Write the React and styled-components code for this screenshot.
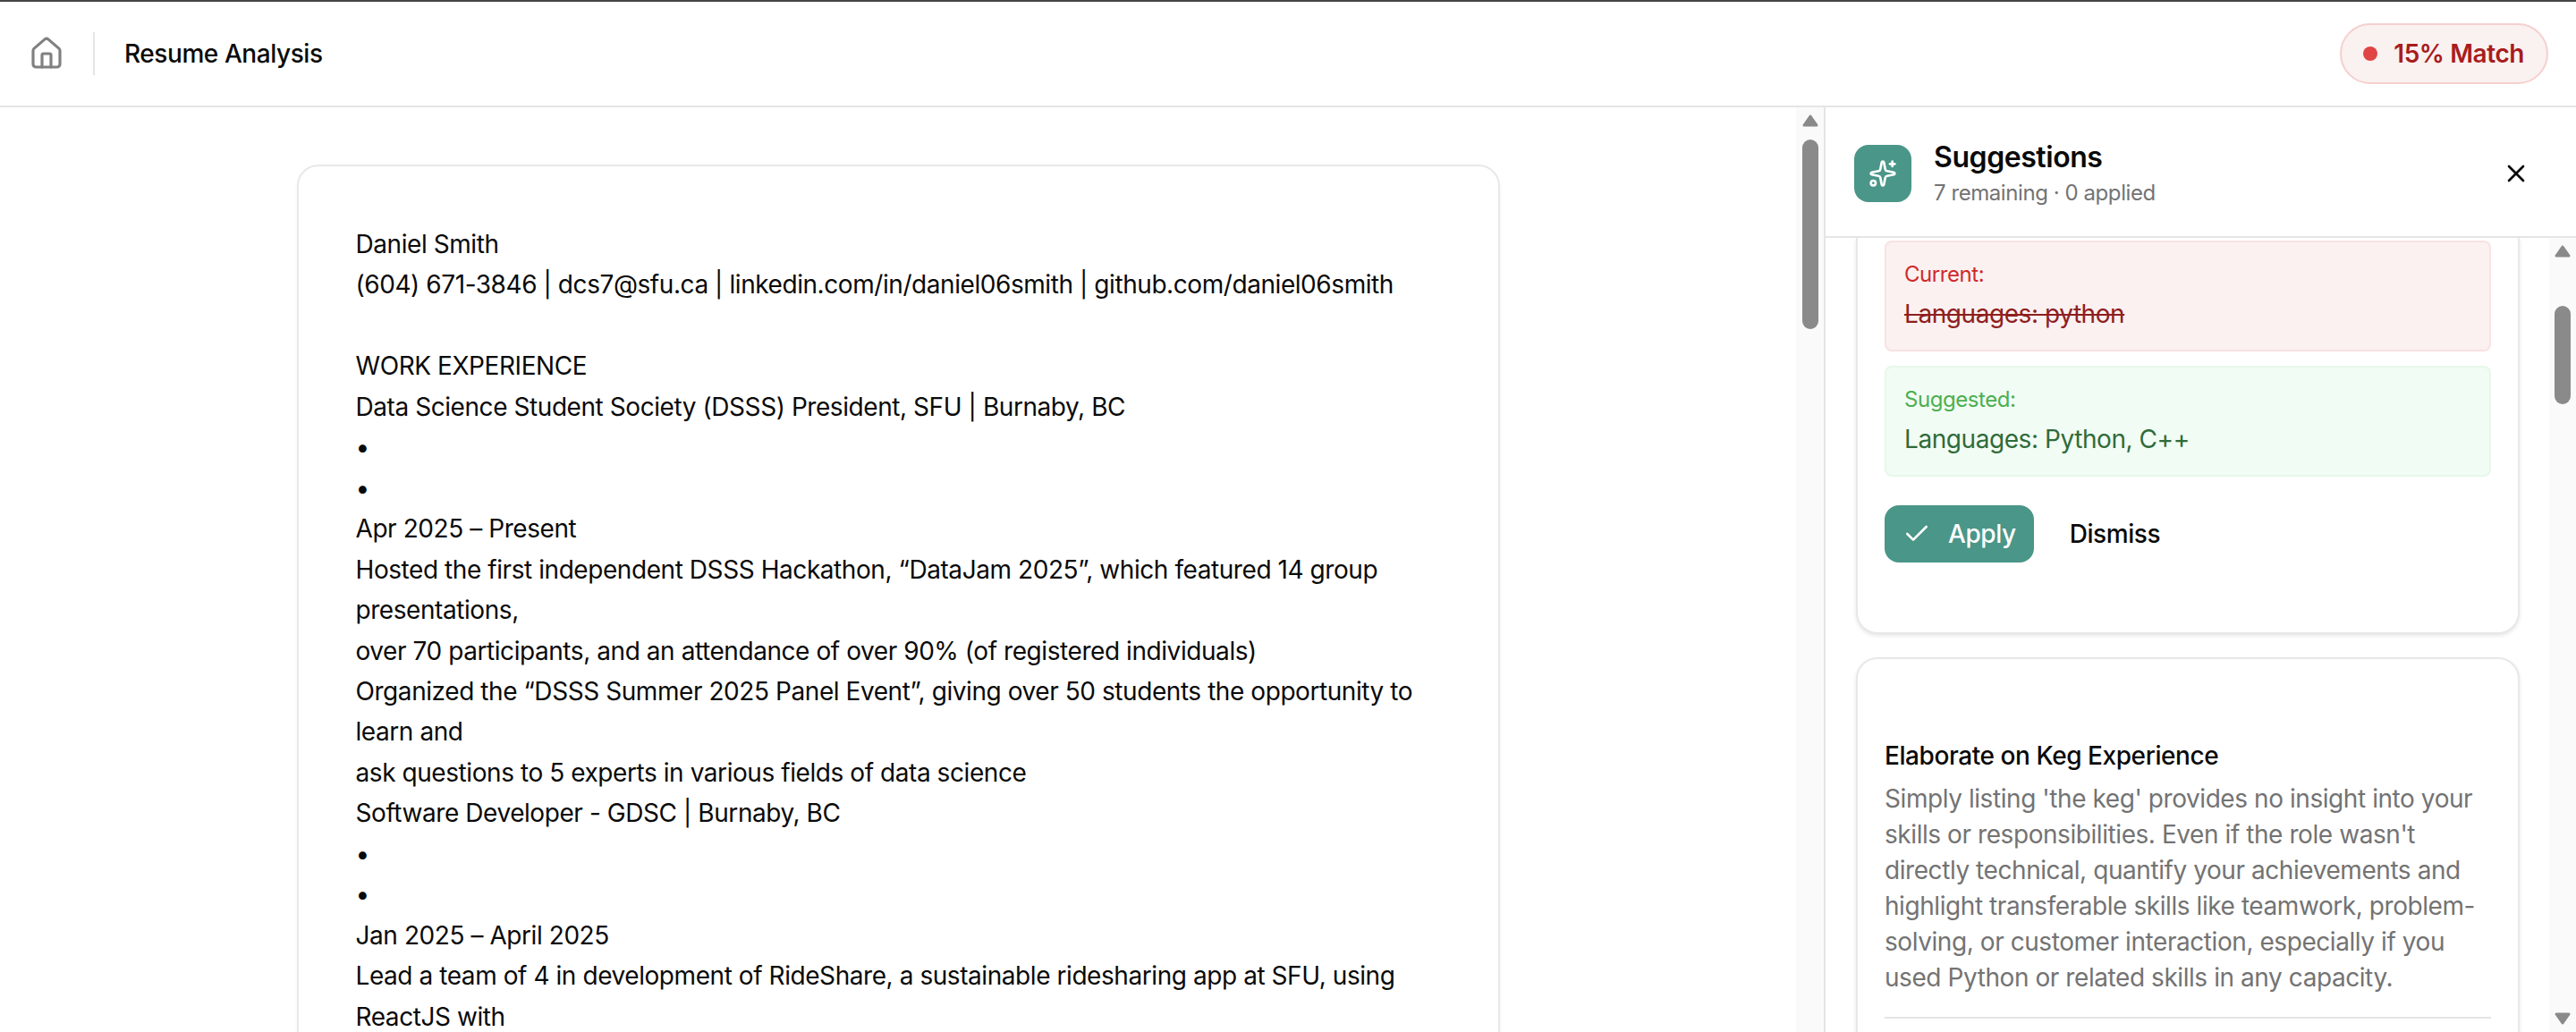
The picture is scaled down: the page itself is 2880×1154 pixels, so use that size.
import styled, { createGlobalStyle } from 'styled-components';
import { House, Sparkles, X, Check } from 'lucide-react';

const resumeLines = [
  'Daniel Smith',
  '(604) 671-3846 | dcs7@sfu.ca | linkedin.com/in/daniel06smith | github.com/daniel06smith',
  '',
  'WORK EXPERIENCE',
  'Data Science Student Society (DSSS) President, SFU | Burnaby, BC',
  '•',
  '•',
  'Apr 2025 – Present',
  'Hosted the first independent DSSS Hackathon, “DataJam 2025”, which featured 14 group',
  'presentations,',
  'over 70 participants, and an attendance of over 90% (of registered individuals)',
  'Organized the “DSSS Summer 2025 Panel Event”, giving over 50 students the opportunity to',
  'learn and',
  'ask questions to 5 experts in various fields of data science',
  'Software Developer - GDSC | Burnaby, BC',
  '•',
  '•',
  'Jan 2025 – April 2025',
  'Lead a team of 4 in development of RideShare, a sustainable ridesharing app at SFU, using',
  'ReactJS with',
];

function ScrollBar({ thumbOffset, thumbHeight, width, downArrow }) {
  return (
    <Track $width={width}>
      <svg width="18" height="14" viewBox="0 0 18 14">
        <path d="M9 2 L16 12 H2 Z" fill="#8a8a8a" stroke="#8a8a8a" strokeWidth="3" strokeLinejoin="round" />
      </svg>
      <Thumb $offset={thumbOffset} $height={thumbHeight} />
      {downArrow && (
        <TrackEnd>
          <svg width="18" height="14" viewBox="0 0 18 14">
            <path d="M9 12 L16 2 H2 Z" fill="#8a8a8a" stroke="#8a8a8a" strokeWidth="3" strokeLinejoin="round" />
          </svg>
        </TrackEnd>
      )}
    </Track>
  );
}

export default function App() {
  return (
    <Page>
      <GlobalStyle />
      <Header>
        <HeaderLeft>
          <HomeButton><House size={40} strokeWidth={1.9} /></HomeButton>
          <HeaderDivider />
          <PageTitle>Resume Analysis</PageTitle>
        </HeaderLeft>
        <MatchBadge>
          <MatchDot />
          15% Match
        </MatchBadge>
      </Header>
      <Body>
        <ResumePane>
          <ResumeScroll>
            <ResumeCard>
              {resumeLines.map((line, i) => (
                <ResumeLine key={i}>{line || '\u00a0'}</ResumeLine>
              ))}
            </ResumeCard>
          </ResumeScroll>
          <ScrollBar width={31} thumbOffset={14} thumbHeight={212} />
        </ResumePane>
        <SidePanel>
          <PanelHeader>
            <PanelHeaderLeft>
              <PanelIcon><Sparkles size={32} strokeWidth={2} /></PanelIcon>
              <div>
                <PanelTitle>Suggestions</PanelTitle>
                <PanelSub>7 remaining · 0 applied</PanelSub>
              </div>
            </PanelHeaderLeft>
            <CloseButton><X size={32} strokeWidth={2} /></CloseButton>
          </PanelHeader>
          <PanelBody>
            <SuggestionList>
              <OpenCard>
                <ChangeBox $kind="current">
                  <ChangeLabel $kind="current">Current:</ChangeLabel>
                  <ChangeValue $kind="current">Languages: python</ChangeValue>
                </ChangeBox>
                <ChangeBox $kind="suggested">
                  <ChangeLabel $kind="suggested">Suggested:</ChangeLabel>
                  <ChangeValue $kind="suggested">Languages: Python, C++</ChangeValue>
                </ChangeBox>
                <Actions>
                  <ApplyButton><Check size={32} strokeWidth={2} />Apply</ApplyButton>
                  <DismissButton>Dismiss</DismissButton>
                </Actions>
              </OpenCard>
              <SuggestionCard>
                <CardTitle>Elaborate on Keg Experience</CardTitle>
                <CardText>
                  Simply listing 'the keg' provides no insight into your skills or responsibilities. Even if the role wasn't directly technical, quantify your achievements and highlight transferable skills like teamwork, problem-solving, or customer interaction, especially if you used Python or related skills in any capacity.
                </CardText>
                <CardRule />
              </SuggestionCard>
            </SuggestionList>
            <ScrollBar width={30} thumbOffset={54} thumbHeight={110} downArrow />
          </PanelBody>
        </SidePanel>
      </Body>
    </Page>
  );
}

const GlobalStyle = createGlobalStyle`
  * {
    box-sizing: border-box;
  }
  body {
    margin: 0;
    background: #fff;
    color: #0a0a0a;
    font-family: "Inter", "Liberation Sans", sans-serif;
    letter-spacing: -0.027em;
  }
`
const Page = styled.div`
  height: 100vh;
  display: flex;
  flex-direction: column;
  overflow: hidden;
  border-top: 2px solid #444;
`
const Header = styled.header`
  height: 118px;
  flex-shrink: 0;
  display: flex;
  align-items: center;
  justify-content: space-between;
  padding: 0 31px 0 32px;
  border-bottom: 2px solid #e5e5e5;
`
const HeaderLeft = styled.div`
  display: flex;
  align-items: center;
`
const HomeButton = styled.div`
  display: flex;
  color: #808080;
`
const HeaderDivider = styled.div`
  width: 2px;
  height: 48px;
  background: #e5e5e5;
  margin: 0 33px 0 32px;
`
const PageTitle = styled.h1`
  margin: 0;
  font-size: 28px;
  line-height: 40px;
  font-weight: 500;
`
const MatchBadge = styled.div`
  height: 68px;
  display: flex;
  align-items: center;
  gap: 18px;
  padding: 0 25px 0 24px;
  border: 2px solid #f5d0ce;
  border-radius: 34px;
  background: #faf1f1;
  color: #a81c1c;
  font-size: 28px;
  font-weight: 600;
`
const MatchDot = styled.span`
  width: 16px;
  height: 16px;
  border-radius: 50%;
  background: #e04444;
`
const Body = styled.div`
  flex: 1;
  min-height: 0;
  display: flex;
`
const ResumePane = styled.main`
  flex: 1;
  min-width: 0;
  display: flex;
`
const ResumeScroll = styled.div`
  flex: 1;
  min-width: 0;
  overflow: hidden;
  padding-top: 64px;
`
const ResumeCard = styled.article`
  width: 1345px;
  margin: 0 auto;
  padding: 65px 64px 64px;
  background: #fff;
  border: 2px solid #e8e8e8;
  border-radius: 24px;
  box-shadow: 0 2px 4px rgba(0, 0, 0, 0.04);
`
const ResumeLine = styled.div`
  font-size: 28px;
  line-height: 45.45px;
  white-space: nowrap;
`
const Track = styled.div`
  width: ${(p) => p.$width}px;
  flex-shrink: 0;
  display: flex;
  flex-direction: column;
  align-items: center;
  padding: 8px 0 8px;
  background: #fafafa;
`
const Thumb = styled.div`
  width: 18px;
  height: ${(p) => p.$height}px;
  margin-top: ${(p) => p.$offset}px;
  border-radius: 9px;
  background: #8a8a8a;
`
const TrackEnd = styled.div`
  margin-top: auto;
  display: flex;
`
const SidePanel = styled.aside`
  width: 841px;
  flex-shrink: 0;
  display: flex;
  flex-direction: column;
  border-left: 2px solid #e5e5e5;
`
const PanelHeader = styled.div`
  flex-shrink: 0;
  display: flex;
  align-items: center;
  justify-content: space-between;
  padding: 36px 43px 32px 32px;
  border-bottom: 2px solid #e5e5e5;
`
const PanelHeaderLeft = styled.div`
  display: flex;
  align-items: center;
  gap: 25px;
`
const PanelIcon = styled.div`
  width: 64px;
  height: 64px;
  display: flex;
  align-items: center;
  justify-content: center;
  border-radius: 16px;
  background: #4a9688;
  color: #fff;
`
const PanelTitle = styled.h2`
  margin: 0;
  font-size: 32px;
  line-height: 40px;
  font-weight: 600;
`
const PanelSub = styled.p`
  margin: 4px 0 0;
  font-size: 24px;
  line-height: 32px;
  color: #737373;
`
const CloseButton = styled.button`
  display: flex;
  padding: 8px;
  border: none;
  background: none;
  color: #0a0a0a;
`
const PanelBody = styled.div`
  flex: 1;
  min-height: 0;
  display: flex;
`
const SuggestionList = styled.div`
  flex: 1;
  min-width: 0;
  overflow: hidden;
  padding: 0 33px 0 34px;
`
const SuggestionCard = styled.section`
  margin-top: 26px;
  padding: 88px 30px 60px;
  border: 2px solid #e8e8e8;
  border-radius: 24px;
  background: #fff;
  box-shadow: 0 2px 4px rgba(0, 0, 0, 0.1);
`
const OpenCard = styled(SuggestionCard)`
  margin-top: 0;
  padding: 3px 30px 78px;
  border-top: none;
  border-radius: 0 0 24px 24px;
`
const ChangeBox = styled.div`
  padding: 20px 20px 18px;
  margin-bottom: 16px;
  border: 2px solid ${(p) => (p.$kind === 'current' ? '#f8e2e2' : '#e6f8ea')};
  border-radius: 8px;
  background: ${(p) => (p.$kind === 'current' ? '#fbf1f1' : '#f1fcf4')};
`
const ChangeLabel = styled.div`
  font-size: 24px;
  line-height: 32px;
  margin-bottom: 6px;
  color: ${(p) => (p.$kind === 'current' ? '#cf2a2a' : '#4caf50')};
`
const ChangeValue = styled.div`
  font-size: 28px;
  line-height: 44px;
  color: ${(p) => (p.$kind === 'current' ? '#8e1f1f' : '#2f6b3a')};
  text-decoration: ${(p) => (p.$kind === 'current' ? 'line-through' : 'none')};
`
const Actions = styled.div`
  display: flex;
  align-items: center;
  gap: 24px;
  margin-top: 32px;
`
const ApplyButton = styled.button`
  height: 64px;
  display: flex;
  align-items: center;
  gap: 19px;
  padding: 0 20px;
  border: none;
  border-radius: 16px;
  background: #4a9688;
  color: #fff;
  font: inherit;
  font-size: 28px;
  font-weight: 500;
  letter-spacing: inherit;
`
const DismissButton = styled.button`
  height: 64px;
  padding: 0 16px;
  border: none;
  background: none;
  color: #0a0a0a;
  font: inherit;
  font-size: 28px;
  font-weight: 500;
  letter-spacing: inherit;
`
const CardTitle = styled.h3`
  margin: 0 0 8px;
  font-size: 28px;
  line-height: 40px;
  font-weight: 500;
`
const CardText = styled.p`
  margin: 0;
  font-size: 28px;
  line-height: 40px;
  color: #737373;
`
const CardRule = styled.div`
  height: 2px;
  margin-top: 24px;
  background: #e5e5e5;
`
